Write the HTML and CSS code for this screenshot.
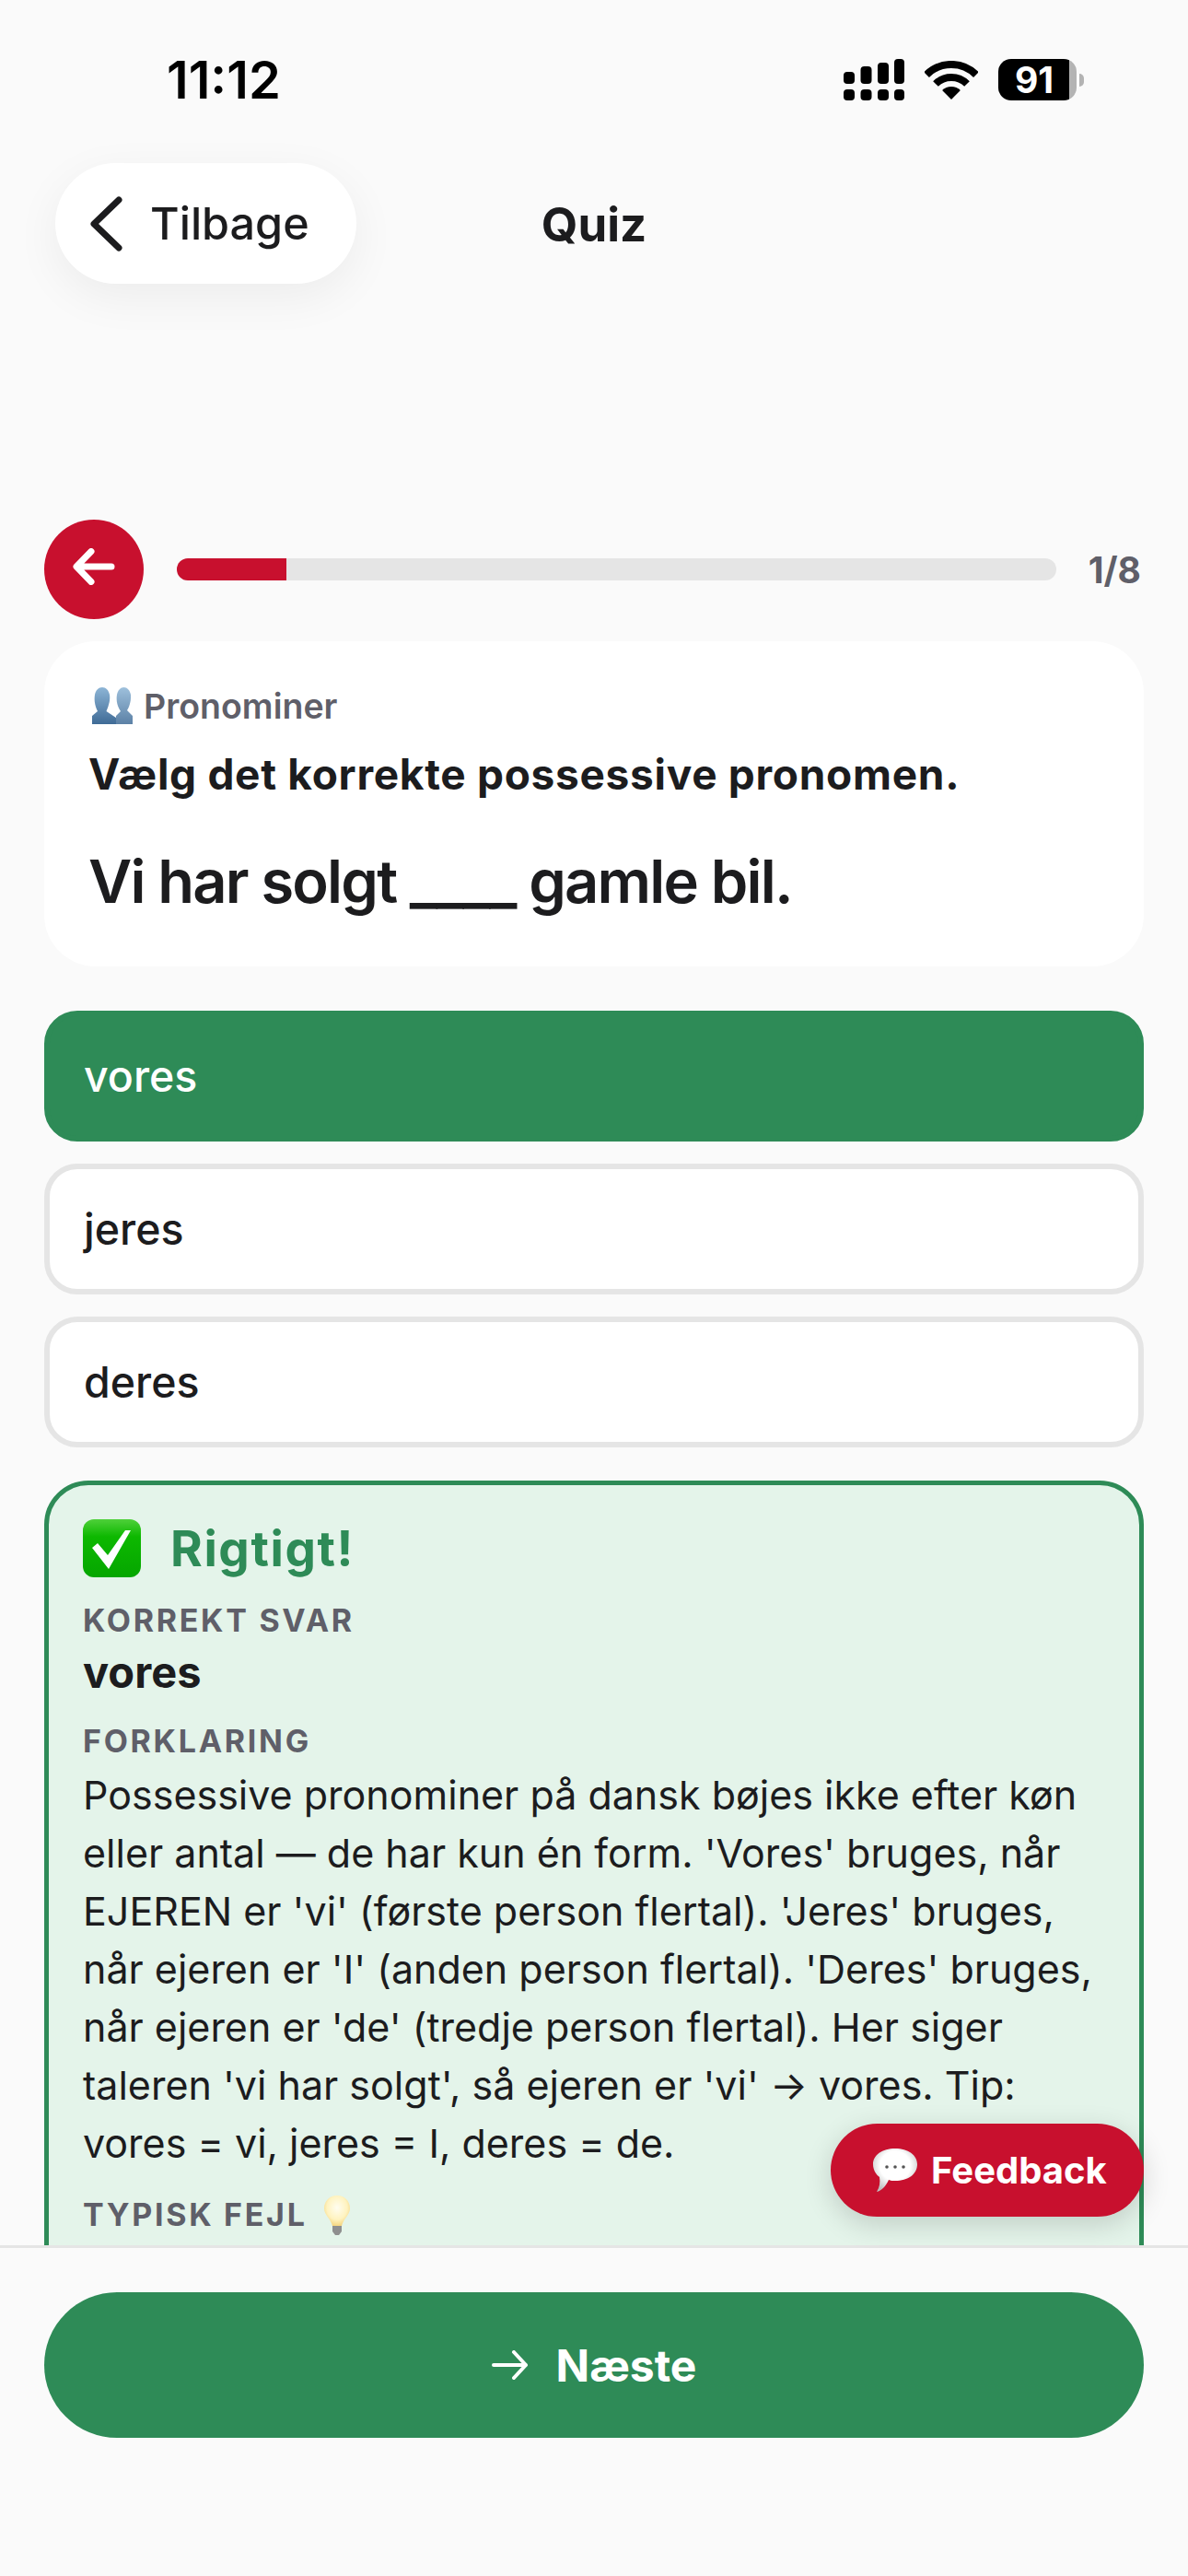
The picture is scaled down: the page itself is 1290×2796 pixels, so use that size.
FILE: index.html
```html
<!DOCTYPE html>
<html lang="da">
<head>
    <meta charset="UTF-8">
    <meta name="viewport" content="width=device-width, initial-scale=1.0">
    <title>Quiz</title>
    <link rel="stylesheet" href="styles.css">
</head>
<body>
    <div class="page">
        <header class="status-bar">
            <span class="time">11:12</span>
            <div class="status-icons">
                <svg class="signal" width="66" height="45" viewBox="0 0 66 45" fill="#000">
                    <rect x="0" y="14" width="12" height="13" rx="4"/>
                    <rect x="18.500" y="8" width="12" height="19" rx="4"/>
                    <rect x="37" y="4" width="12" height="23" rx="4"/>
                    <rect x="55" y="0" width="11" height="27" rx="4"/>
                    <rect x="0" y="33" width="12" height="12" rx="4"/>
                    <rect x="18.500" y="33" width="12" height="12" rx="4"/>
                    <rect x="37" y="33" width="12" height="12" rx="4"/>
                    <rect x="55" y="33" width="11" height="12" rx="4"/>
                </svg>
                <svg class="wifi" width="58" height="42" viewBox="0 0 58 42">
                    <path d="M2.100 15.100A38 38 0 0 1 55.900 15.100" fill="none" stroke="#000" stroke-width="8"/>
                    <path d="M12 25A24 24 0 0 1 46 25" fill="none" stroke="#000" stroke-width="8"/>
                    <path d="M29 42L19.100 32.100A14 14 0 0 1 38.900 32.100Z" fill="#000"/>
                </svg>
                <div class="battery"><span class="battery-level">91</span></div>
                <span class="battery-nub"></span>
            </div>
        </header>

        <nav class="nav-bar">
            <button class="back-button">
                <svg width="36" height="60" viewBox="0 0 36 60" fill="none" stroke="#1c1c1e" stroke-width="7" stroke-linecap="round" stroke-linejoin="round"><path d="M32 4L5 30L32 56"/></svg>
                <span>Tilbage</span>
            </button>
            <h1 class="nav-title">Quiz</h1>
        </nav>

        <main class="content">
            <div class="progress-row">
                <button class="prev-button">
                    <svg width="46" height="40" viewBox="0 0 46 40" fill="none" stroke="#fff" stroke-width="7" stroke-linecap="round" stroke-linejoin="round"><path d="M42 20H5M20 3.500L4 20L20 36.500"/></svg>
                </button>
                <div class="progress-track"><div class="progress-fill" style="width: 12.5%"></div></div>
                <span class="progress-count">1/8</span>
            </div>

            <section class="question-card">
                <div class="category">
                    <svg width="44" height="40" viewBox="0 0 44 40">
                        <defs><linearGradient id="bust" x1="0" y1="0" x2="0" y2="1"><stop offset="0" stop-color="#8db5d6"/><stop offset="1" stop-color="#3f6b96"/></linearGradient></defs>
                        <path d="M26 40V31L31 26C27 20 26 14 27 8C28 3 31 0 34.500 0C38 0 41 3 42 8C42.500 14 41 20 38 25L44 31V40Z" fill="url(#bust)" opacity="0.85"/>
                        <path d="M0 40V31L6 26C3 20 2 14 3 8C4 3 7 0 11 0C15 0 18 3 19 8C20 14 18 20 15.500 26L26 33V40Z" fill="url(#bust)"/>
                    </svg>
                    <span>Pronominer</span>
                </div>
                <p class="instruction">Vælg det korrekte possessive pronomen.</p>
                <p class="sentence">Vi har solgt ____ gamle bil.</p>
            </section>

            <div class="options">
                <button class="option option-correct">vores</button>
                <button class="option">jeres</button>
                <button class="option">deres</button>
            </div>

            <section class="result">
                <div class="result-head">
                    <svg width="63" height="63" viewBox="0 0 63 63">
                        <defs><linearGradient id="tick" x1="0" y1="0" x2="0" y2="1"><stop offset="0" stop-color="#4fd03a"/><stop offset="0.3" stop-color="#0db800"/><stop offset="1" stop-color="#05a600"/></linearGradient></defs>
                        <rect width="63" height="63" rx="12" fill="url(#tick)"/>
                        <path d="M10 31L16 26L27 39L46 12L52 12L28 54Z" fill="#fff"/>
                    </svg>
                    <h2>Rigtigt!</h2>
                </div>
                <h3 class="result-label">KORREKT SVAR</h3>
                <p class="result-answer">vores</p>
                <h3 class="result-label label-gap">FORKLARING</h3>
                <p class="result-text">Possessive pronominer på dansk bøjes ikke efter køn eller antal — de har kun én form. 'Vores' bruges, når EJEREN er 'vi' (første person flertal). 'Jeres' bruges, når ejeren er 'I' (anden person flertal). 'Deres' bruges, når ejeren er 'de' (tredje person flertal). Her siger taleren 'vi har solgt', så ejeren er 'vi' → vores. Tip: vores = vi, jeres = I, deres = de.</p>
                <h3 class="result-label tip-label">
                    <span>TYPISK FEJL</span>
                    <svg width="28" height="43" viewBox="0 0 28 43">
                        <defs><radialGradient id="bulb" cx="0.5" cy="0.4" r="0.65"><stop offset="0" stop-color="#fffdf0"/><stop offset="0.6" stop-color="#fff3c0"/><stop offset="1" stop-color="#f3cf72"/></radialGradient></defs>
                        <path d="M14 0C22 0 28 6 28 14C28 21 21 25 19 33H9C7 25 0 21 0 14C0 6 6 0 14 0Z" fill="url(#bulb)"/>
                        <path d="M9 33H19V39L16 43H12L9 39Z" fill="#8f8f8f"/>
                    </svg>
                </h3>
            </section>
        </main>

        <button class="feedback-button">
            <svg width="48" height="48" viewBox="0 0 48 48">
                <defs><radialGradient id="bubble" cx="0.5" cy="0.4" r="0.62"><stop offset="0.55" stop-color="#fff"/><stop offset="1" stop-color="#bdbdbd"/></radialGradient></defs>
                <path d="M24 0C38 0 48 7 48 17C48 28 38 35 24 35C21 35 19 35 17 34C14 41 9 46 4 47C7 42 8 37 7 31C3 28 0 23 0 17C0 7 10 0 24 0Z" fill="url(#bubble)"/>
                <circle cx="15" cy="20" r="1.800" fill="#555"/><circle cx="24" cy="20" r="1.800" fill="#555"/><circle cx="33" cy="20" r="1.800" fill="#555"/>
            </svg>
            <span>Feedback</span>
        </button>

        <footer class="footer">
            <button class="next-button">
                <svg width="39" height="32" viewBox="0 0 39 32" fill="none" stroke="#fff" stroke-width="4" stroke-linecap="round" stroke-linejoin="round"><path d="M2 16H37M24 2L37 16L24 30"/></svg>
                <span>Næste</span>
            </button>
        </footer>
    </div>
</body>
</html>
```

FILE: styles.css
```css
* {
    box-sizing: border-box;
}
html, body {
    margin: 0;
    padding: 0;
}
body {
    font-family: Inter, "Liberation Sans", sans-serif;
    background-color: #fafafa;
    color: #1c1c1e;
}
button {
    font-family: inherit;
    border: none;
    cursor: pointer;
}
h1, h2, h3, p {
    margin: 0;
}
.page {
    position: relative;
    display: flex;
    flex-direction: column;
    height: 2796px;
    overflow: hidden;
}

/* status bar */
.status-bar {
    display: flex;
    align-items: flex-start;
    justify-content: space-between;
    height: 177px;
    padding: 54px 113px 0 181px;
}
.time {
    font-size: 56px;
    line-height: 66px;
    font-weight: 600;
    color: #000000;
}
.status-icons {
    display: flex;
    align-items: center;
    padding-top: 10px;
}
.wifi {
    margin: 0 22px;
}
.battery {
    width: 85px;
    height: 45px;
    border-radius: 14px;
    background: linear-gradient(to right, #000000 91%, #b3b3b3 91%);
}
.battery-level {
    display: block;
    width: 78px;
    font-size: 39px;
    line-height: 45px;
    font-weight: 700;
    text-align: center;
    color: #ffffff;
}
.battery-nub {
    width: 5px;
    height: 14px;
    margin-left: 3px;
    border-radius: 0 7px 7px 0;
    background-color: #b3b3b3;
}

/* nav */
.nav-bar {
    position: relative;
    height: 363px;
    padding-left: 60px;
}
.back-button {
    display: flex;
    align-items: center;
    gap: 30px;
    width: 327px;
    height: 131px;
    padding: 0 0 0 37px;
    border-radius: 66px;
    background-color: #ffffff;
    box-shadow: 0 14px 50px rgba(0, 0, 0, 0.06);
    font-size: 48.500px;
    font-weight: 500;
    color: #1c1c1e;
}
.nav-title {
    position: absolute;
    top: 0;
    left: 0;
    right: 0;
    line-height: 133px;
    font-size: 51px;
    font-weight: 700;
    text-align: center;
}

/* main */
.content {
    flex: 1;
    min-height: 0;
    overflow: hidden;
    padding: 24px 48px 0;
}
.progress-row {
    display: flex;
    align-items: center;
}
.prev-button {
    display: flex;
    align-items: center;
    justify-content: center;
    width: 108px;
    height: 108px;
    padding: 0 0 7px;
    border-radius: 50%;
    background-color: #c8102e;
}
.progress-track {
    flex: 1;
    height: 24px;
    margin: 0 35px 0 36px;
    border-radius: 12px;
    background-color: #e5e5e5;
}
.progress-fill {
    height: 100%;
    border-radius: 12px 0 0 12px;
    background-color: #c8102e;
}
.progress-count {
    padding-right: 3px;
    font-size: 39px;
    font-weight: 700;
    color: #5f5f69;
}
.question-card {
    height: 353px;
    margin-top: 24px;
    padding: 48px 48px 0;
    border-radius: 56px;
    background-color: #ffffff;
}
.category {
    display: flex;
    align-items: center;
    gap: 12px;
    height: 44px;
    padding-left: 4px;
    font-size: 37.500px;
    font-weight: 600;
    color: #5f5f69;
}
.instruction {
    margin-top: 22px;
    font-size: 46px;
    line-height: 60px;
    font-weight: 700;
    letter-spacing: 0.700px;
}
.sentence {
    margin-top: 47px;
    font-size: 65px;
    line-height: 80px;
    font-weight: 600;
    letter-spacing: -1.800px;
}
.options {
    display: flex;
    flex-direction: column;
    gap: 24px;
    margin-top: 48px;
}
.option {
    height: 142px;
    padding: 0 37px;
    border: 6px solid #e5e5e5;
    border-radius: 36px;
    background-color: #ffffff;
    font-size: 46.500px;
    font-weight: 500;
    text-align: left;
    color: #1c1c1e;
}
.option-correct {
    border-color: #2e8b57;
    background-color: #2e8b57;
    color: #ffffff;
}
.result {
    margin-top: 36px;
    padding: 37px 37px 60px;
    border: 5px solid #2e8b57;
    border-radius: 48px;
    background-color: #e4f4ea;
}
.result-head {
    display: flex;
    align-items: center;
    gap: 32px;
    height: 63px;
}
.result-head h2 {
    font-size: 53px;
    font-weight: 700;
    letter-spacing: 1.600px;
    color: #2e8b57;
}
.result-label {
    margin-top: 25px;
    font-size: 34px;
    line-height: 44px;
    font-weight: 700;
    letter-spacing: 2.700px;
    color: #5f5f69;
}
.label-gap {
    margin-top: 25px;
}
.result-answer {
    margin-top: 6px;
    font-size: 47px;
    line-height: 56px;
    font-weight: 700;
}
.result-text {
    margin-top: 5px;
    font-size: 43px;
    line-height: 63px;
}
.tip-label {
    display: flex;
    align-items: center;
    gap: 18px;
    margin-top: 24px;
}

/* floating feedback */
.feedback-button {
    position: absolute;
    left: 902px;
    top: 2305px;
    display: flex;
    align-items: center;
    gap: 15px;
    width: 340px;
    height: 101px;
    padding: 0 0 0 46px;
    border-radius: 51px;
    background-color: #c8102e;
    box-shadow: 0 8px 30px rgba(0, 0, 0, 0.16);
    font-size: 40px;
    font-weight: 700;
    color: #ffffff;
}

/* footer */
.footer {
    height: 359px;
    padding: 48px 48px 0;
    border-top: 3px solid #e5e5e5;
    background-color: #fafafa;
}
.next-button {
    display: flex;
    align-items: center;
    justify-content: center;
    gap: 31px;
    width: 100%;
    height: 158px;
    border-radius: 79px;
    background-color: #2e8b57;
    font-size: 48px;
    font-weight: 700;
    color: #ffffff;
}
```
